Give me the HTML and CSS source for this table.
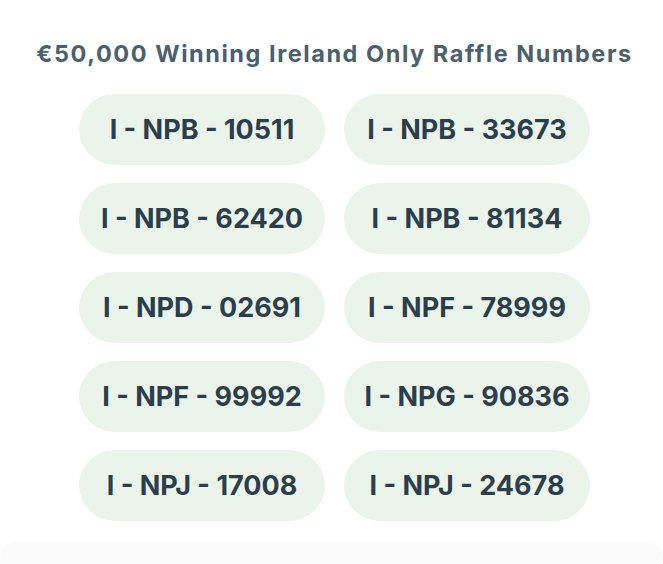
FILE: index.html
```html
<!DOCTYPE html>
<html>
<head>
<meta charset="utf-8">
<link rel="stylesheet" href="styles.css">
</head>
<body>
<div class="page">
  <h2 class="title">€50,000 Winning Ireland Only Raffle Numbers</h2>
  <div class="grid">
    <div class="pill">I - NPB - 10511</div>
    <div class="pill">I - NPB - 33673</div>
    <div class="pill">I - NPB - 62420</div>
    <div class="pill">I - NPB - 81134</div>
    <div class="pill">I - NPD - 02691</div>
    <div class="pill">I - NPF - 78999</div>
    <div class="pill">I - NPF - 99992</div>
    <div class="pill">I - NPG - 90836</div>
    <div class="pill">I - NPJ - 17008</div>
    <div class="pill">I - NPJ - 24678</div>
  </div>
  <div class="footer-band"></div>
</div>
</body>
</html>
```

FILE: styles.css
```css
html, body {
  margin: 0;
  padding: 0;
  background: #ffffff;
}
.page {
  width: 663px;
  height: 564px;
  overflow: hidden;
  font-family: "Inter", "Noto Sans", sans-serif;
}
.title {
  margin: 0;
  padding: 39px 0 0 6px;
  height: 55px;
  box-sizing: border-box;
  text-align: center;
  font-size: 23.5px;
  font-weight: 700;
  letter-spacing: 1.55px;
  color: #4c5f6d;
  line-height: 29px;
}
.grid {
  display: grid;
  grid-template-columns: 246px 246px;
  column-gap: 19px;
  row-gap: 18px;
  justify-content: center;
  padding: 39px 0 0 6px;
}
.pill {
  height: 71px;
  border-radius: 36px;
  background: #ebf4eb;
  display: flex;
  align-items: center;
  justify-content: center;
  font-size: 27px;
  font-weight: 700;
  letter-spacing: 0;
  color: #2d3e4b;
}
.footer-band {
  margin-top: 21px;
  height: 31px;
  background: #fbfbfb;
  border-radius: 16px 16px 0 0;
}
```
